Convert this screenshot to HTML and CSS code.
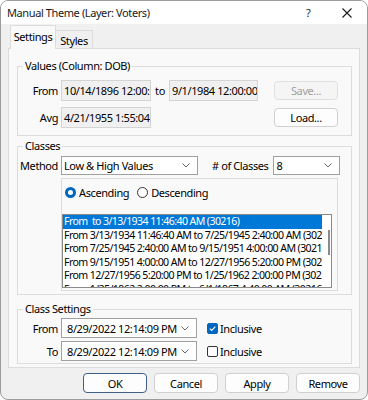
FILE: index.html
```html
<!DOCTYPE html>
<html>
<head>
<meta charset="utf-8">
<link rel="stylesheet" href="styles.css">
</head>
<body>
<div class="window">
  <div class="titlebar">
    <span class="title">Manual Theme (Layer: Voters)</span>
    <span class="help">?</span>
    <svg class="close" width="10" height="10" viewBox="0 0 10 10"><path d="M0.5 0.5L9.5 9.5M9.5 0.5L0.5 9.5" stroke="#1a1a1a" stroke-width="1.1" fill="none"/></svg>
  </div>
  <div class="tabs">
    <div class="tab active">Settings</div>
    <div class="tab">Styles</div>
  </div>
  <div class="panel">
    <fieldset class="group values">
      <legend>Values (Column: DOB)</legend>
      <div class="row">
        <span class="lbl">From</span>
        <div class="field ro w89">10/14/1896 12:00:00 AM</div>
        <span class="to">to</span>
        <div class="field ro w88">9/1/1984 12:00:00 AM</div>
        <div class="btn disabled side">Save...</div>
      </div>
      <div class="row row2">
        <span class="lbl">Avg</span>
        <div class="field ro w89">4/21/1955 1:55:04 AM</div>
        <div class="btn side load">Load...</div>
      </div>
    </fieldset>

    <fieldset class="group classes">
      <legend>Classes</legend>
      <div class="row method">
        <span class="lbl">Method</span>
        <div class="combo w137"><span>Low &amp; High Values</span><svg class="chev" width="8" height="5" viewBox="0 0 8 5"><path d="M0.5 0.5L4 4L7.5 0.5" stroke="#6a6a6a" fill="none"/></svg></div>
        <span class="ncls">#&nbsp;of Classes</span>
        <div class="combo w67"><span>8</span><svg class="chev" width="8" height="5" viewBox="0 0 8 5"><path d="M0.5 0.5L4 4L7.5 0.5" stroke="#6a6a6a" fill="none"/></svg></div>
      </div>
      <div class="inner">
        <div class="radios">
          <span class="radio on"></span><span class="rtext">Ascending</span>
          <span class="radio"></span><span class="rtext">Descending</span>
        </div>
        <div class="list">
          <div class="items">
            <div class="item sel">From &nbsp;to 3/13/1934 11:46:40 AM (30216)</div>
            <div class="item">From 3/13/1934 11:46:40 AM to 7/25/1945 2:40:00 AM (30216)</div>
            <div class="item">From 7/25/1945 2:40:00 AM to 9/15/1951 4:00:00 AM (30216)</div>
            <div class="item">From 9/15/1951 4:00:00 AM to 12/27/1956 5:20:00 PM (30216)</div>
            <div class="item">From 12/27/1956 5:20:00 PM to 1/25/1962 2:00:00 PM (30216)</div>
            <div class="item">From 1/25/1962 2:00:00 PM to 6/1/1967 4:40:00 AM (30216)</div>
          </div>
          <div class="scroll"><span class="thumb"></span></div>
        </div>
      </div>
    </fieldset>

    <fieldset class="group csettings">
      <legend>Class Settings</legend>
      <div class="row drow">
        <span class="lbl">From</span>
        <div class="combo date"><span>8/29/2022 12:14:09 PM</span><svg class="chev" width="8" height="5" viewBox="0 0 8 5"><path d="M0.5 0.5L4 4L7.5 0.5" stroke="#6a6a6a" fill="none"/></svg></div>
        <span class="check on"><svg width="9" height="9" viewBox="0 0 9 9"><path d="M1.8 4.6L3.7 6.4L7.3 2.6" stroke="#fff" stroke-width="1.1" fill="none"/></svg></span>
        <span class="ctext">Inclusive</span>
      </div>
      <div class="row drow drow2">
        <span class="lbl">To</span>
        <div class="combo date"><span>8/29/2022 12:14:09 PM</span><svg class="chev" width="8" height="5" viewBox="0 0 8 5"><path d="M0.5 0.5L4 4L7.5 0.5" stroke="#6a6a6a" fill="none"/></svg></div>
        <span class="check"></span>
        <span class="ctext">Inclusive</span>
      </div>
    </fieldset>
  </div>
  <div class="buttons">
    <div class="btn dlg default">OK</div>
    <div class="btn dlg">Cancel</div>
    <div class="btn dlg">Apply</div>
    <div class="btn dlg">Remove</div>
  </div>
</div>
</body>
</html>
```
FILE: styles.css
```css
* { box-sizing: border-box; }
html, body { margin: 0; padding: 0; }
body {
  width: 368px;
  height: 400px;
  font-family: "Noto Sans", "Open Sans", sans-serif;
  font-size: 11px;
  letter-spacing: -0.4px;
  color: #000;
  background: #ffffff;
}
.window {
  width: 368px;
  height: 400px;
  border: 1px solid #9c9c9c;
  border-radius: 8px;
  background: #f0f0f0;
  overflow: hidden;
  display: flex;
  flex-direction: column;
}
.titlebar {
  flex: none;
  height: 23px;
  background: #ffffff;
  display: flex;
  align-items: center;
  padding: 0 15px 0 6px;
  color: #1a1a1a;
}
.title { flex: 1; white-space: nowrap; }
.help { width: 8px; margin-right: 28px; }
.close { display: block; }

.tabs {
  flex: none;
  height: 24px;
  display: flex;
  align-items: flex-end;
  padding-left: 9px;
  position: relative;
  z-index: 1;
}
.tab {
  height: 18px;
  border: 1px solid #dcdcdc;
  border-bottom: none;
  background: #f0f0f0;
  display: flex;
  align-items: center;
  justify-content: center;
  width: 38px;
  margin-left: -1px;
  padding-top: 1px;
}
.tab.active {
  height: 24px;
  width: 46px;
  margin-bottom: -1px;
  margin-left: 0;
  background: #f9f9f9;
  padding-top: 0;
  padding-bottom: 3px;
}

.panel {
  flex: none;
  height: 320px;
  margin: 0 7px;
  border: 1px solid #dcdcdc;
  background: #f9f9f9;
  padding: 10px 7px 3px 8px;
}
.group {
  margin: 0;
  padding: 0;
  border: 1px solid #dcdcdc;
  min-width: 0;
}
.group legend {
  padding: 0 2px;
  margin-left: 5px;
  line-height: 14px;
  height: 14px;
}
.values { padding: 7px 0 7px 0; }
.classes { margin-top: 3px; padding: 3px 0 3px 0; }
.csettings { margin-top: 7px; padding: 2px 0 2px 0; }

.row { display: flex; align-items: center; height: 21px; }
.row2 { margin-top: 6px; }
.lbl { width: 40px; text-align: right; flex: none; margin-right: 3px; white-space: nowrap; }

.field {
  height: 21px;
  border: 1px solid #d4d4d4;
  background: #f0f0f0;
  white-space: nowrap;
  overflow: hidden;
  padding: 0 2px;
  line-height: 19px;
  flex: none;
}
.w89 { width: 90px; }
.w88 { width: 89px; }
.to { width: 18px; text-align: center; flex: none; }

.btn {
  height: 19px;
  border: 1px solid #d0d0d0;
  border-radius: 4px;
  background: #fdfdfd;
  display: flex;
  align-items: center;
  justify-content: center;
  flex: none;
}
.side { width: 64px; margin-left: 16px; }
.load { margin-left: 123px; }
.disabled { color: #a0a0a0; background: #f5f5f5; border-color: #e0e0e0; }

.method { height: 19px; }
.combo {
  height: 19px;
  border: 1px solid #a0a0a0;
  background: #ffffff;
  display: flex;
  align-items: center;
  padding: 0 7px 0 2px;
  flex: none;
  white-space: nowrap;
}
.combo span { flex: 1; overflow: hidden; }
.chev { display: block; flex: none; }
.w137 { width: 137px; }
.w67 { width: 67px; }
.ncls { margin-left: 14px; margin-right: 5px; white-space: nowrap; }

.inner {
  margin: 3px 0 0 43px;
  width: 277px;
  border: 1px solid #dcdcdc;
  padding: 5px 0 2px 0;
}
.radios { display: flex; align-items: center; height: 16px; padding-left: 3px; }
.radio {
  width: 11px;
  height: 11px;
  border-radius: 50%;
  border: 1px solid #333;
  background: #fff;
  flex: none;
}
.radio.on {
  border: 3.5px solid #0067c0;
  background: #fff;
}
.rtext { margin-left: 3px; margin-right: 8px; }

.list {
  margin-top: 14px;
  width: 270px;
  height: 74px;
  border: 1px solid #8a8a8a;
  background: #ffffff;
  display: flex;
  overflow: hidden;
}
.items { width: 259px; flex: none; overflow: hidden; }
.item {
  height: 13.5px;
  line-height: 13.5px;
  white-space: nowrap;
  overflow: hidden;
  padding-left: 1px;
  font-size: 10.6px;
  letter-spacing: -0.6px;
}
.item.sel { background: #0078d7; color: #fff; }
.scroll { flex: 1; position: relative; }
.thumb {
  position: absolute;
  left: 6px;
  top: 15px;
  width: 2px;
  height: 25px;
  background: #8a8a8a;
}

.drow { height: 20px; }
.drow2 { margin-top: 3px; }
.date { width: 136px; height: 20px; padding-left: 5px; }
.check {
  margin-left: 10px;
  width: 11px;
  height: 11px;
  border: 1px solid #333;
  border-radius: 2px;
  background: #fff;
  flex: none;
  display: flex;
  align-items: center;
  justify-content: center;
}
.check.on { background: #0067c0; border-color: #0067c0; }
.check svg { display: block; }
.ctext { margin-left: 2px; }

.buttons {
  flex: none;
  display: flex;
  justify-content: flex-end;
  gap: 7px;
  padding-right: 7px;
  margin-top: 5px;
}
.dlg { width: 64px; height: 20px; }
.default { border: 1.5px solid #3f5f86; }
```
